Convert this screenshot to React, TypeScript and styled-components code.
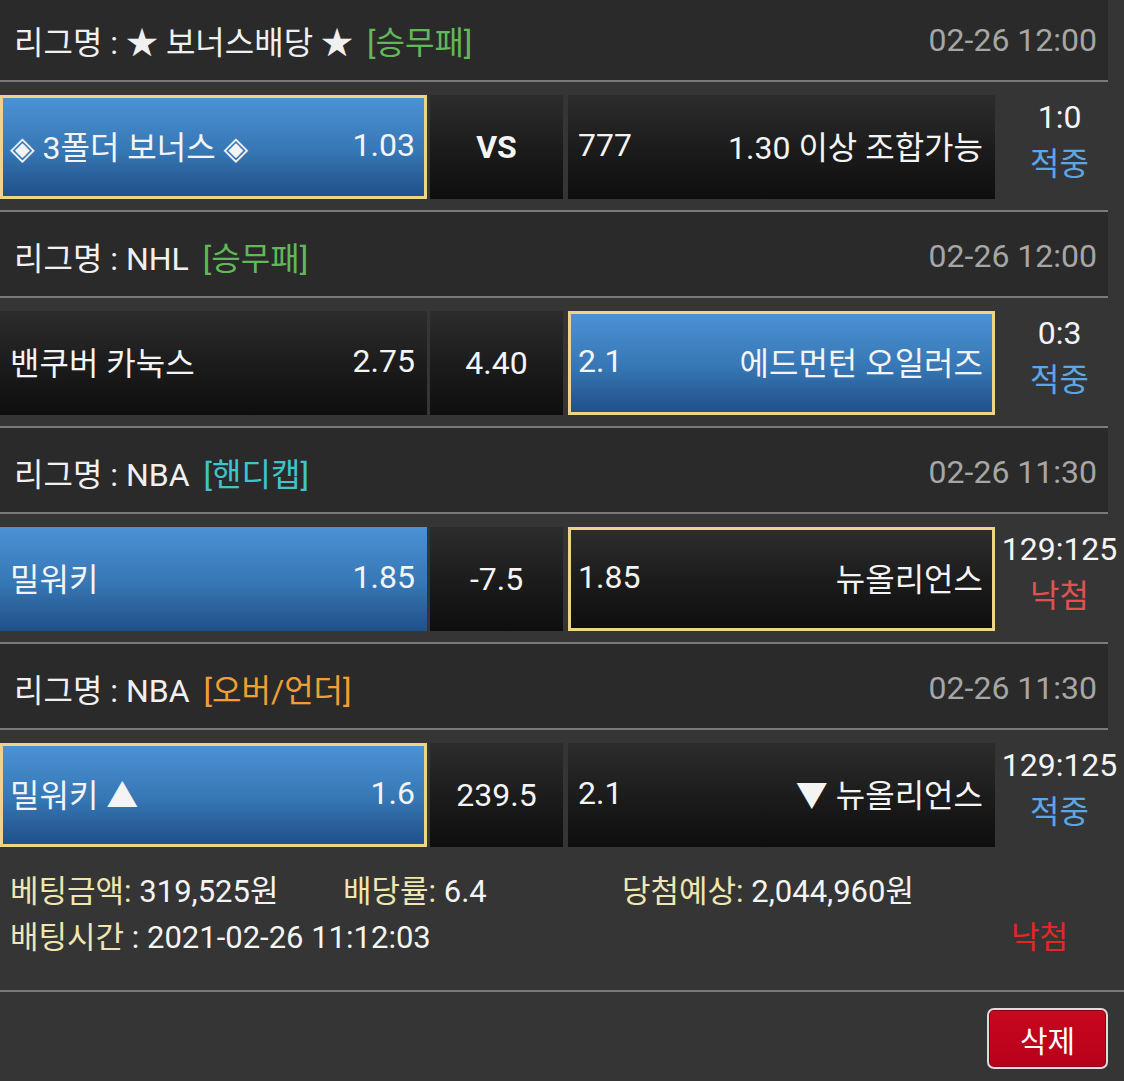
import React from 'react'
import styled, { createGlobalStyle } from 'styled-components'

const GlobalStyle = createGlobalStyle`
  body {
    margin: 0;
    background: #353535;
  }
`

type Side = {
  name: string
  odds: string
  selected?: boolean
  bordered?: boolean
}

type Match = {
  league: string
  tag: string
  tagColor: string
  time: string
  home: Side
  middle: string
  middleBold?: boolean
  away: Side
  score: string
  result: 'hit' | 'miss'
}

const matches: Match[] = [
  {
    league: '★ 보너스배당 ★',
    tag: '[승무패]',
    tagColor: '#62b859',
    time: '02-26 12:00',
    home: { name: '◈ 3폴더 보너스 ◈', odds: '1.03', selected: true, bordered: true },
    middle: 'VS',
    middleBold: true,
    away: { name: '1.30 이상 조합가능', odds: '777' },
    score: '1:0',
    result: 'hit',
  },
  {
    league: 'NHL',
    tag: '[승무패]',
    tagColor: '#62b859',
    time: '02-26 12:00',
    home: { name: '밴쿠버 카눅스', odds: '2.75' },
    middle: '4.40',
    away: { name: '에드먼턴 오일러즈', odds: '2.1', selected: true, bordered: true },
    score: '0:3',
    result: 'hit',
  },
  {
    league: 'NBA',
    tag: '[핸디캡]',
    tagColor: '#3fc4cc',
    time: '02-26 11:30',
    home: { name: '밀워키', odds: '1.85', selected: true },
    middle: '-7.5',
    away: { name: '뉴올리언스', odds: '1.85', bordered: true },
    score: '129:125',
    result: 'miss',
  },
  {
    league: 'NBA',
    tag: '[오버/언더]',
    tagColor: '#f0a032',
    time: '02-26 11:30',
    home: { name: '밀워키 ▲', odds: '1.6', selected: true, bordered: true },
    middle: '239.5',
    away: { name: '▼ 뉴올리언스', odds: '2.1' },
    score: '129:125',
    result: 'hit',
  },
]

const App = () => {
  return (
    <Page>
      <GlobalStyle />
      {matches.map((m, i) => (
        <Block key={i}>
          {i > 0 && <Divider />}
          <LeagueHeader>
            <LeagueTitle>
              리그명 : {m.league}
              <LeagueTag color={m.tagColor}>{m.tag}</LeagueTag>
            </LeagueTitle>
            <LeagueTime>{m.time}</LeagueTime>
          </LeagueHeader>
          <Divider />
          <MatchRow>
            <TeamCell $selected={m.home.selected} $bordered={m.home.bordered}>
              <span>{m.home.name}</span>
              <span>{m.home.odds}</span>
            </TeamCell>
            <MiddleCell $bold={m.middleBold}>{m.middle}</MiddleCell>
            <TeamCell $selected={m.away.selected} $bordered={m.away.bordered}>
              <span>{m.away.odds}</span>
              <span>{m.away.name}</span>
            </TeamCell>
            <ScoreCol>
              <Score>{m.score}</Score>
              <Result $hit={m.result === 'hit'}>{m.result === 'hit' ? '적중' : '낙첨'}</Result>
            </ScoreCol>
          </MatchRow>
        </Block>
      ))}
      <Summary>
        <SummaryLine>
          <SummaryItem $width={333}>
            <Label>베팅금액:</Label> 319,525원
          </SummaryItem>
          <SummaryItem $width={279}>
            <Label>배당률:</Label> 6.4
          </SummaryItem>
          <SummaryItem>
            <Label>당첨예상:</Label> 2,044,960원
          </SummaryItem>
        </SummaryLine>
        <SummaryLine>
          <SummaryItem>
            <Label>배팅시간</Label> : 2021-02-26 11:12:03
          </SummaryItem>
          <FinalResult>낙첨</FinalResult>
        </SummaryLine>
      </Summary>
      <Divider $full />
      <Footer>
        <DeleteButton>삭제</DeleteButton>
      </Footer>
    </Page>
  )
}

const Page = styled.div`
  width: 1124px;
  margin-top: -4px;
  background: #353535;
  color: #f2f2f2;
  font-family: Roboto, "Noto Sans CJK KR", "DejaVu Sans", sans-serif;
  font-size: 32px;
  overflow: hidden;
`

const Block = styled.div`
  display: flex;
  flex-direction: column;
`

const Divider = styled.div<{ $full?: boolean }>`
  height: 2px;
  width: ${(p) => (p.$full ? '100%' : '1108px')};
  background: #7a7a7a;
`

const LeagueHeader = styled.div`
  width: 1108px;
  height: 84px;
  box-sizing: border-box;
  padding: 4px 11px 0 14px;
  background: #2a2a2a;
  display: flex;
  align-items: center;
  justify-content: space-between;
`

const LeagueTitle = styled.div`
  color: #f0f0f0;
  white-space: pre;
`

const LeagueTag = styled.span<{ color: string }>`
  color: ${(p) => p.color};
  margin-left: 14px;
`

const LeagueTime = styled.div`
  color: #a6a6a6;
`

const MatchRow = styled.div`
  display: flex;
  padding: 13px 0 11px;
  height: 104px;
`

const TeamCell = styled.div<{ $selected?: boolean; $bordered?: boolean }>`
  width: 427px;
  box-sizing: border-box;
  display: flex;
  align-items: center;
  justify-content: space-between;
  padding-bottom: 4px;
  color: #f4f4f4;
  white-space: pre;
  background: ${(p) =>
    p.$selected
      ? 'linear-gradient(to bottom, #4b92d4 0%, #3676b4 55%, #1f5089 100%)'
      : 'linear-gradient(to bottom, #2d2d2d 0%, #1c1c1c 50%, #0e0e0e 100%)'};
  border: ${(p) => (p.$bordered ? '3px solid #ecd48a' : 'none')};
  padding-left: ${(p) => (p.$bordered ? '7px' : '10px')};
  padding-right: ${(p) => (p.$bordered ? '9px' : '12px')};
`

const MiddleCell = styled.div<{ $bold?: boolean }>`
  width: 133px;
  margin: 0 5px 0 3px;
  display: flex;
  align-items: center;
  justify-content: center;
  box-sizing: border-box;
  font-weight: ${(p) => (p.$bold ? 700 : 400)};
  color: #f4f4f4;
  background: linear-gradient(to bottom, #2d2d2d 0%, #1c1c1c 50%, #0e0e0e 100%);
`

const ScoreCol = styled.div`
  flex: 1;
  display: flex;
  flex-direction: column;
  align-items: center;
  line-height: 47px;
  margin-top: -1px;
`

const Score = styled.div`
  color: #f4f4f4;
`

const Result = styled.div<{ $hit: boolean }>`
  color: ${(p) => (p.$hit ? '#5aa6e6' : '#e05252')};
`

const Summary = styled.div`
  padding: 11px 0 29px 10px;
  display: flex;
  flex-direction: column;
  font-size: 31px;
  line-height: 46px;
`

const SummaryLine = styled.div`
  display: flex;
  align-items: center;
`

const SummaryItem = styled.div<{ $width?: number }>`
  width: ${(p) => (p.$width ? `${p.$width}px` : 'auto')};
  color: #f4f4f4;
  white-space: pre;
`

const Label = styled.span`
  color: #efe6b0;
`

const FinalResult = styled.div`
  margin-left: auto;
  margin-right: 56px;
  color: #e32626;
`

const Footer = styled.div`
  display: flex;
  justify-content: flex-end;
  padding: 16px 16px 11px 0;
`

const DeleteButton = styled.button`
  width: 121px;
  height: 61px;
  border: 2px solid #dcdcdc;
  border-radius: 7px;
  background: linear-gradient(to bottom, #c8081e 0%, #b8001a 100%);
  color: #ffffff;
  font-family: Roboto, "Noto Sans CJK KR", sans-serif;
  font-size: 30px;
  padding: 0;
  box-shadow: inset 0 0 0 1px #8a0010;
`

export default App
